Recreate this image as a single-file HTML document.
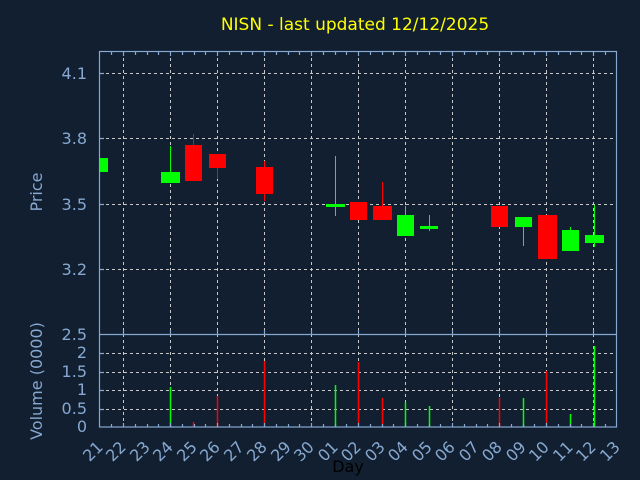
<!DOCTYPE html>
<html><head><meta charset="utf-8"><style>
html,body{margin:0;padding:0;background:#111f30;}
svg{display:block;font-family:"DejaVu Sans","Liberation Sans",sans-serif;}
</style></head><body>
<svg width="640" height="480" viewBox="0 0 640 480" xmlns="http://www.w3.org/2000/svg">
<rect width="640" height="480" fill="#111f30"/>
<text x="355" y="30" fill="#ffff00" font-size="17" text-anchor="middle">NISN - last updated 12/12/2025</text>
<g stroke="#c8c8c8" stroke-width="1" stroke-dasharray="3,3">
<path d="M123.5 52V427M170.5 52V427M217.5 52V427M264.5 52V427M311.5 52V427M358.5 52V427M405.5 52V427M452.5 52V427M499.5 52V427M546.5 52V427M593.5 52V427"/>
<path d="M100 73.5H617M100 138.5H617M100 204.5H617M100 269.5H617M100 409.5H617M100 390.5H617M100 372.5H617M100 353.5H617"/>
</g>
<g fill="#87a8d0" font-size="16" text-anchor="end">
<text x="87" y="79">4.1</text><text x="87" y="144">3.8</text><text x="87" y="210">3.5</text><text x="87" y="275">3.2</text>
<text x="87" y="340">2.5</text><text x="87" y="358">2</text><text x="87" y="377">1.5</text><text x="87" y="395">1</text><text x="87" y="414">0.5</text><text x="87" y="432">0</text>
</g>
<text transform="translate(42,192) rotate(-90)" fill="#87a8d0" font-size="16" text-anchor="middle">Price</text>
<text transform="translate(42,381) rotate(-90)" fill="#87a8d0" font-size="16" text-anchor="middle">Volume (0000)</text>
<text x="348" y="472" fill="#000000" font-size="16" text-anchor="middle">Day</text>
<!-- candles -->
<g stroke-width="1">
<rect x="99" y="158" width="9" height="14" fill="#00ff00"/>
<line x1="170.5" y1="146" x2="170.5" y2="172" stroke="#00ff00"/><rect x="161" y="172" width="19" height="11" fill="#00ff00"/>
<line x1="193.5" y1="134" x2="193.5" y2="145" stroke="#ff0000"/><rect x="185" y="145" width="17" height="36" fill="#ff0000"/>
<line x1="217.5" y1="168" x2="217.5" y2="179" stroke="#ff0000"/><rect x="209" y="154" width="17" height="14" fill="#ff0000"/>
<line x1="264.5" y1="161" x2="264.5" y2="201" stroke="#ff0000"/><rect x="256" y="167" width="17" height="27" fill="#ff0000"/>
<line x1="335.5" y1="156" x2="335.5" y2="216" stroke="#00ff00"/><rect x="326" y="204" width="19" height="3" fill="#00ff00"/>
<rect x="350" y="202" width="17" height="18" fill="#ff0000"/>
<line x1="382.5" y1="182" x2="382.5" y2="206" stroke="#ff0000"/><rect x="373" y="206" width="19" height="14" fill="#ff0000"/>
<line x1="405.5" y1="206" x2="405.5" y2="215" stroke="#00ff00"/><rect x="397" y="215" width="17" height="21" fill="#00ff00"/>
<line x1="429.5" y1="215" x2="429.5" y2="231" stroke="#00ff00"/><rect x="420" y="226" width="18" height="3" fill="#00ff00"/>
<rect x="491" y="206" width="17" height="21" fill="#ff0000"/>
<line x1="523.5" y1="227" x2="523.5" y2="246" stroke="#00ff00"/><rect x="515" y="217" width="17" height="10" fill="#00ff00"/>
<rect x="538" y="215" width="19" height="44" fill="#ff0000"/>
<line x1="570.5" y1="227" x2="570.5" y2="230" stroke="#00ff00"/><rect x="562" y="230" width="17" height="21" fill="#00ff00"/>
<line x1="594.5" y1="205" x2="594.5" y2="247" stroke="#00ff00"/><rect x="585" y="235" width="19" height="8" fill="#00ff00"/>
</g>
<!-- volume -->
<g stroke-width="1.5">
<line x1="170.5" y1="387" x2="170.5" y2="427" stroke="#00ff00"/>
<line x1="193.5" y1="422" x2="193.5" y2="427" stroke="#ff0000"/>
<line x1="217.5" y1="396" x2="217.5" y2="427" stroke="#ff0000"/>
<line x1="264.5" y1="361" x2="264.5" y2="427" stroke="#ff0000"/>
<line x1="335.5" y1="385" x2="335.5" y2="427" stroke="#00ff00"/>
<line x1="358.5" y1="362" x2="358.5" y2="427" stroke="#ff0000"/>
<line x1="382.5" y1="398" x2="382.5" y2="427" stroke="#ff0000"/>
<line x1="405.5" y1="402" x2="405.5" y2="427" stroke="#00ff00"/>
<line x1="429.5" y1="406" x2="429.5" y2="427" stroke="#00ff00"/>
<line x1="499.5" y1="398" x2="499.5" y2="427" stroke="#ff0000"/>
<line x1="523.5" y1="398" x2="523.5" y2="427" stroke="#00ff00"/>
<line x1="546.5" y1="371" x2="546.5" y2="427" stroke="#ff0000"/>
<line x1="570.5" y1="414" x2="570.5" y2="427" stroke="#00ff00"/>
<line x1="594.5" y1="346" x2="594.5" y2="427" stroke="#00ff00"/>
</g>
<!-- frame -->
<g stroke="#87a8d0" fill="none" stroke-width="1.2">
<rect x="99.5" y="51.5" width="517" height="375.5"/>
<line x1="99.5" y1="334.5" x2="616.5" y2="334.5"/>
<path d="M111.5 52v3M123.5 52v4M135.5 52v3M147.5 52v3M158.5 52v3M170.5 52v4M182.5 52v3M194.5 52v3M205.5 52v3M217.5 52v4M229.5 52v3M241.5 52v3M252.5 52v3M264.5 52v4M276.5 52v3M288.5 52v3M299.5 52v3M311.5 52v4M323.5 52v3M335.5 52v3M346.5 52v3M358.5 52v4M370.5 52v3M382.5 52v3M393.5 52v3M405.5 52v4M417.5 52v3M429.5 52v3M440.5 52v3M452.5 52v4M464.5 52v3M476.5 52v3M487.5 52v3M499.5 52v4M511.5 52v3M523.5 52v3M534.5 52v3M546.5 52v4M558.5 52v3M570.5 52v3M581.5 52v3M593.5 52v4M605.5 52v3"/>
<path d="M111.5 427v-3M123.5 427v-4M135.5 427v-3M147.5 427v-3M158.5 427v-3M170.5 427v-4M182.5 427v-3M194.5 427v-3M205.5 427v-3M217.5 427v-4M229.5 427v-3M241.5 427v-3M252.5 427v-3M264.5 427v-4M276.5 427v-3M288.5 427v-3M299.5 427v-3M311.5 427v-4M323.5 427v-3M335.5 427v-3M346.5 427v-3M358.5 427v-4M370.5 427v-3M382.5 427v-3M393.5 427v-3M405.5 427v-4M417.5 427v-3M429.5 427v-3M440.5 427v-3M452.5 427v-4M464.5 427v-3M476.5 427v-3M487.5 427v-3M499.5 427v-4M511.5 427v-3M523.5 427v-3M534.5 427v-3M546.5 427v-4M558.5 427v-3M570.5 427v-3M581.5 427v-3M593.5 427v-4M605.5 427v-3"/>
<path d="M100 73.5h4M100 138.5h4M100 204.5h4M100 269.5h4M100 409.5h4M100 390.5h4M100 372.5h4M100 353.5h4"/>
<path d="M123.5 334v-4M170.5 334v-4M217.5 334v-4M264.5 334v-4M311.5 334v-4M358.5 334v-4M405.5 334v-4M452.5 334v-4M499.5 334v-4M546.5 334v-4M593.5 334v-4"/>
</g>
<g fill="#87a8d0" font-size="16">
<text transform="translate(104,448) rotate(-45)" text-anchor="end">21</text>
<text transform="translate(127,448) rotate(-45)" text-anchor="end">22</text>
<text transform="translate(151,448) rotate(-45)" text-anchor="end">23</text>
<text transform="translate(174,448) rotate(-45)" text-anchor="end">24</text>
<text transform="translate(198,448) rotate(-45)" text-anchor="end">25</text>
<text transform="translate(221,448) rotate(-45)" text-anchor="end">26</text>
<text transform="translate(245,448) rotate(-45)" text-anchor="end">27</text>
<text transform="translate(268,448) rotate(-45)" text-anchor="end">28</text>
<text transform="translate(292,448) rotate(-45)" text-anchor="end">29</text>
<text transform="translate(315,448) rotate(-45)" text-anchor="end">30</text>
<text transform="translate(339,448) rotate(-45)" text-anchor="end">01</text>
<text transform="translate(362,448) rotate(-45)" text-anchor="end">02</text>
<text transform="translate(386,448) rotate(-45)" text-anchor="end">03</text>
<text transform="translate(409,448) rotate(-45)" text-anchor="end">04</text>
<text transform="translate(433,448) rotate(-45)" text-anchor="end">05</text>
<text transform="translate(456,448) rotate(-45)" text-anchor="end">06</text>
<text transform="translate(480,448) rotate(-45)" text-anchor="end">07</text>
<text transform="translate(503,448) rotate(-45)" text-anchor="end">08</text>
<text transform="translate(527,448) rotate(-45)" text-anchor="end">09</text>
<text transform="translate(550,448) rotate(-45)" text-anchor="end">10</text>
<text transform="translate(574,448) rotate(-45)" text-anchor="end">11</text>
<text transform="translate(597,448) rotate(-45)" text-anchor="end">12</text>
<text transform="translate(621,448) rotate(-45)" text-anchor="end">13</text>
</g>
</svg>
</body></html>
